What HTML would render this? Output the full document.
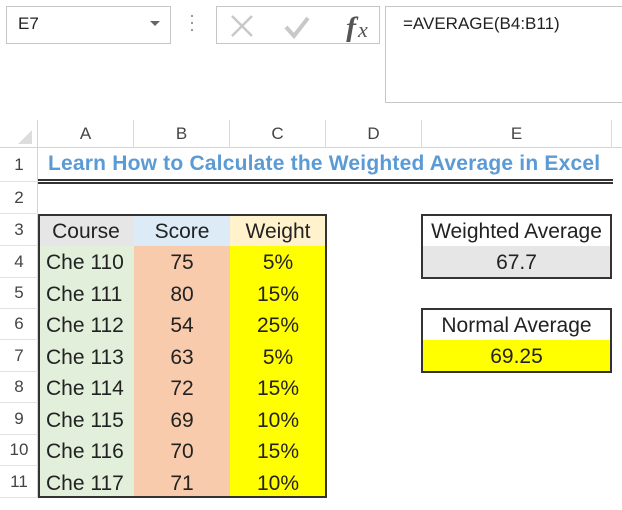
<!DOCTYPE html>
<html><head><meta charset="utf-8"><style>
*{margin:0;padding:0;box-sizing:border-box}
body{width:622px;height:510px;background:#fff;position:relative;overflow:hidden;font-family:"Liberation Sans",sans-serif;}
.a{position:absolute}
.c{position:absolute;display:flex;align-items:center;justify-content:center;font-size:21px;color:#222}
.rh{position:absolute;left:0;width:38px;display:flex;align-items:center;justify-content:center;font-size:17px;color:#444;border-bottom:1px solid #e2e2e2}
.ch{position:absolute;top:120px;height:28px;display:flex;align-items:center;justify-content:center;font-size:17px;color:#444;border-right:1px solid #dadada}
</style></head><body>
<!-- formula bar -->
<div class="a" style="left:6px;top:6px;width:165px;height:38px;border:1px solid #c6c6c6"></div>
<div class="a" style="left:18px;top:14px;font-size:17px;color:#222">E7</div>
<div class="a" style="left:150px;top:21px;width:0;height:0;border-left:5px solid transparent;border-right:5px solid transparent;border-top:5px solid #666"></div>
<div class="a" style="left:191px;top:15px;width:2px;height:2px;background:#999;box-shadow:0 7px 0 #999,0 14px 0 #999"></div>
<div class="a" style="left:216px;top:6px;width:164px;height:38px;border:1px solid #c6c6c6"></div>
<svg class="a" style="left:228px;top:10px" width="150" height="32">
<path d="M4 6 L24 26 M24 6 L4 26" stroke="#c8c8c8" stroke-width="2.5"/>
<path d="M58 17 L66 26 L80 8" stroke="#c8c8c8" stroke-width="4" fill="none"/>
<text x="118" y="27" font-family="Liberation Serif,serif" font-style="italic" font-weight="bold" font-size="30" fill="#555">f</text>
<text x="130" y="27" font-family="Liberation Serif,serif" font-style="italic" font-size="22" fill="#555">x</text>
</svg>
<div class="a" style="left:385px;top:6px;width:250px;height:97px;border:1px solid #c6c6c6"></div>
<div class="a" style="left:403px;top:14px;font-size:17px;color:#222">=AVERAGE(B4:B11)</div>
<!-- column headers -->
<div class="a" style="left:0;top:120px;width:622px;height:28px;background:#fff;border-bottom:1px solid #d4d4d4"></div>
<svg class="a" style="left:16px;top:128px" width="18" height="18"><path d="M16 2 L16 16 L2 16 Z" fill="#ddd"/></svg>
<div class="a" style="left:37px;top:120px;width:1px;height:378px;background:#d4d4d4"></div>
<div class="ch" style="left:38px;width:96px">A</div>
<div class="ch" style="left:134px;width:96px">B</div>
<div class="ch" style="left:230px;width:96px">C</div>
<div class="ch" style="left:326px;width:96px">D</div>
<div class="ch" style="left:422px;width:190px">E</div>
<!-- row headers -->
<div class="rh" style="top:148px;height:34px">1</div>
<div class="rh" style="top:182px;height:32px">2</div>
<div class="rh" style="top:214px;height:32px">3</div>
<div class="rh" style="top:246px;height:32px">4</div>
<div class="rh" style="top:278px;height:31px">5</div>
<div class="rh" style="top:309px;height:31px">6</div>
<div class="rh" style="top:340px;height:32px">7</div>
<div class="rh" style="top:372px;height:31px">8</div>
<div class="rh" style="top:403px;height:32px">9</div>
<div class="rh" style="top:435px;height:31px">10</div>
<div class="rh" style="top:466px;height:32px">11</div>
<!-- title -->
<div class="a" style="left:48px;top:152px;font-size:21px;font-weight:bold;color:#5b9bd5;white-space:nowrap;letter-spacing:0.2px">Learn How to Calculate the Weighted Average in Excel</div>
<div class="a" style="left:38px;top:179px;width:575px;height:5px;border-top:2px solid #333;border-bottom:2px solid #333"></div>
<!-- table -->
<div class="a" style="left:38px;top:214px;width:96px;height:32px;background:#e7e6e6"></div>
<div class="a" style="left:134px;top:214px;width:96px;height:32px;background:#ddebf7"></div>
<div class="a" style="left:230px;top:214px;width:96px;height:32px;background:#fff2cc"></div>
<div class="a" style="left:38px;top:246px;width:96px;height:252px;background:#e2efda"></div>
<div class="a" style="left:134px;top:246px;width:96px;height:252px;background:#f8cbad"></div>
<div class="a" style="left:230px;top:246px;width:96px;height:252px;background:#ffff00"></div>
<div class="a" style="left:38px;top:214px;width:289px;height:284px;border:2px solid #333"></div>
<div class="c" style="left:38px;top:216px;width:96px;height:31px">Course</div>
<div class="c" style="left:134px;top:216px;width:96px;height:31px">Score</div>
<div class="c" style="left:230px;top:216px;width:96px;height:31px">Weight</div>
<div class="a" style="left:46px;top:247px;width:90px;font-size:21px;color:#222;line-height:31.5px;white-space:nowrap">Che 110<br>Che 111<br>Che 112<br>Che 113<br>Che 114<br>Che 115<br>Che 116<br>Che 117</div>
<div class="a" style="left:134px;top:247px;width:96px;text-align:center;font-size:21px;color:#222;line-height:31.5px">75<br>80<br>54<br>63<br>72<br>69<br>70<br>71</div>
<div class="a" style="left:230px;top:247px;width:96px;text-align:center;font-size:21px;color:#222;line-height:31.5px">5%<br>15%<br>25%<br>5%<br>15%<br>10%<br>15%<br>10%</div>
<!-- boxes -->
<div class="a" style="left:421px;top:246px;width:191px;height:32px;background:#e7e6e6"></div>
<div class="a" style="left:421px;top:214px;width:191px;height:65px;border:2px solid #333"></div>
<div class="c" style="left:421px;top:216px;width:191px;height:31px;white-space:nowrap">Weighted Average</div>
<div class="c" style="left:421px;top:247px;width:191px;height:31px">67.7</div>
<div class="a" style="left:421px;top:340px;width:191px;height:32px;background:#ffff00"></div>
<div class="a" style="left:421px;top:308px;width:191px;height:65px;border:2px solid #333"></div>
<div class="c" style="left:421px;top:310px;width:191px;height:31px">Normal Average</div>
<div class="c" style="left:421px;top:341px;width:191px;height:31px">69.25</div>
</body></html>
